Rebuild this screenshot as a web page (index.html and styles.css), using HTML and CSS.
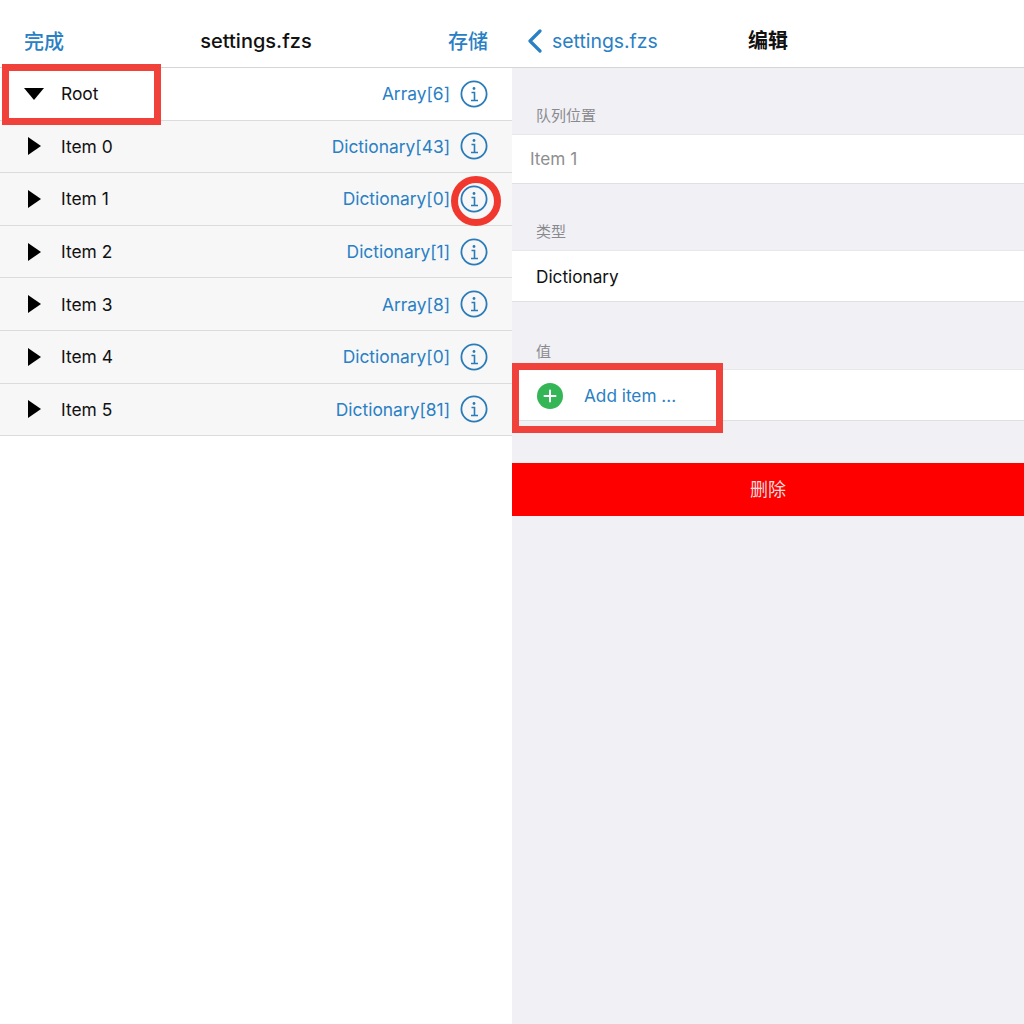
FILE: index.html
```html
<!DOCTYPE html>
<html lang="zh">
<head>
  <meta charset="UTF-8">
  <title>settings.fzs</title>
  <link rel="stylesheet" href="styles.css">
</head>
<body>

  <div class="screens">
    <section class="pane list-pane">
      <header class="nav">
        <span class="nav-action">完成</span>
        <span class="nav-title">settings.fzs</span>
        <span class="nav-action">存储</span>
      </header>

      <div class="tree">
        <div class="row root">
          <svg class="arrow" width="20" height="14" viewBox="0 0 20 14"><path d="M0 1h20L10 13z"/></svg>
          <span class="row-name">Root</span>
          <span class="row-type">Array[6]</span>
          <svg class="info" width="28" height="28" viewBox="0 0 28 28"><use href="#info-icon"/></svg>
        </div>
        <div class="row">
          <svg class="arrow" width="20" height="18" viewBox="0 0 20 18"><path d="M4 0l13 9-13 9z"/></svg>
          <span class="row-name">Item 0</span>
          <span class="row-type">Dictionary[43]</span>
          <svg class="info" width="28" height="28" viewBox="0 0 28 28"><use href="#info-icon"/></svg>
        </div>
        <div class="row">
          <svg class="arrow" width="20" height="18" viewBox="0 0 20 18"><path d="M4 0l13 9-13 9z"/></svg>
          <span class="row-name">Item 1</span>
          <span class="row-type">Dictionary[0]</span>
          <svg class="info" width="28" height="28" viewBox="0 0 28 28"><use href="#info-icon"/></svg>
          <span class="mark-circle"></span>
        </div>
        <div class="row">
          <svg class="arrow" width="20" height="18" viewBox="0 0 20 18"><path d="M4 0l13 9-13 9z"/></svg>
          <span class="row-name">Item 2</span>
          <span class="row-type">Dictionary[1]</span>
          <svg class="info" width="28" height="28" viewBox="0 0 28 28"><use href="#info-icon"/></svg>
        </div>
        <div class="row">
          <svg class="arrow" width="20" height="18" viewBox="0 0 20 18"><path d="M4 0l13 9-13 9z"/></svg>
          <span class="row-name">Item 3</span>
          <span class="row-type">Array[8]</span>
          <svg class="info" width="28" height="28" viewBox="0 0 28 28"><use href="#info-icon"/></svg>
        </div>
        <div class="row">
          <svg class="arrow" width="20" height="18" viewBox="0 0 20 18"><path d="M4 0l13 9-13 9z"/></svg>
          <span class="row-name">Item 4</span>
          <span class="row-type">Dictionary[0]</span>
          <svg class="info" width="28" height="28" viewBox="0 0 28 28"><use href="#info-icon"/></svg>
        </div>
        <div class="row">
          <svg class="arrow" width="20" height="18" viewBox="0 0 20 18"><path d="M4 0l13 9-13 9z"/></svg>
          <span class="row-name">Item 5</span>
          <span class="row-type">Dictionary[81]</span>
          <svg class="info" width="28" height="28" viewBox="0 0 28 28"><use href="#info-icon"/></svg>
        </div>
      </div>
      <div class="mark-box mark-root"></div>
    </section>

    <section class="pane edit-pane">
      <header class="nav edit-nav">
        <span class="back">
          <svg width="16" height="24" viewBox="0 0 16 24"><path d="M13 2L3 12l10 10" fill="none" stroke="#2a80c4" stroke-width="3.2" stroke-linecap="round" stroke-linejoin="round"/></svg>
          settings.fzs
        </span>
        <span class="nav-title edit-title">编辑</span>
      </header>

      <div class="group-label first-label">队列位置</div>
      <div class="field name-field">Item 1</div>

      <div class="group-label">类型</div>
      <div class="field type-field">Dictionary</div>

      <div class="group-label value-label">值</div>
      <div class="field add-field">
        <svg width="26" height="26" viewBox="0 0 26 26">
          <circle cx="13" cy="13" r="13" fill="#34b556"/>
          <path d="M13 7.5v11M7.5 13h11" stroke="#fff" stroke-width="2" stroke-linecap="round"/>
        </svg>
        <span class="add-text">Add item ...</span>
      </div>
      <div class="mark-box mark-add"></div>

      <div class="delete-btn">删除</div>
    </section>
  </div>

  <svg class="defs" width="0" height="0">
    <defs>
      <g id="info-icon" fill="none" stroke="#2a7cb8">
        <circle cx="14" cy="14" r="12.6" stroke-width="1.8"/>
        <path d="M11.5 12.5H14.5V20M11 20.5h7" stroke-width="1.6"/>
        <circle cx="14" cy="8.5" r="1.4" fill="#2a7cb8" stroke="none"/>
      </g>
    </defs>
  </svg>

</body>
</html>
```

FILE: styles.css
```css
html, body {
  margin: 0;
  padding: 0;
  background: #fff;
}

body {
  font-family: Inter, "Noto Sans CJK SC", sans-serif;
  color: #111;
}

.screens {
  display: flex;
  width: 1024px;
  height: 1024px;
  overflow: hidden;
}

.pane {
  position: relative;
  width: 512px;
  height: 1024px;
}

.edit-pane {
  background: #f0f0f5;
}

.nav {
  display: flex;
  align-items: center;
  justify-content: space-between;
  box-sizing: border-box;
  height: 68px;
  padding: 14px 24px 0;
  background: #fff;
  border-bottom: 1px solid #d6d6d8;
}

.nav-action {
  font-size: 20px;
  font-weight: 500;
  color: #2a80c4;
}

.nav-title {
  font-size: 20px;
  font-weight: 500;
}

.edit-nav {
  position: relative;
  justify-content: flex-start;
  padding-left: 15px;
}

.edit-title {
  position: absolute;
  left: 236px;
  top: 27px;
  line-height: 28px;
  font-weight: 600;
}

.back {
  display: flex;
  align-items: center;
  gap: 9px;
  font-size: 19.4px;
  color: #2a80c4;
}

.tree .row {
  display: flex;
  align-items: center;
  position: relative;
  box-sizing: border-box;
  height: 52.6px;
  padding: 0 24px;
  background: #f7f7f7;
  border-bottom: 1px solid #dcdcde;
}

.tree .root {
  background: #fff;
}

.arrow {
  width: 20px;
  margin-right: 17px;
  flex: none;
}

.row-name {
  flex: 1;
  font-size: 17.4px;
}

.row-type {
  font-size: 17.4px;
  color: #2a80c4;
  margin-right: 10px;
}

.info {
  flex: none;
}

.mark-circle {
  position: absolute;
  right: 11px;
  top: 3px;
  box-sizing: border-box;
  width: 50px;
  height: 50px;
  border: 7px solid #f0382f;
  border-radius: 50%;
}

.mark-box {
  position: absolute;
  box-sizing: border-box;
  border: 7px solid #f0413a;
}

.mark-root {
  left: 2px;
  top: 64px;
  width: 159px;
  height: 61px;
}

.mark-add {
  left: 0;
  top: 363px;
  width: 211px;
  height: 70px;
}

.group-label {
  margin: 38px 0 0;
  padding-left: 24px;
  height: 19px;
  line-height: 19px;
  font-size: 15px;
  color: #8a8a8e;
}

.first-label {
  margin-top: 38px;
}

.value-label {
  margin-top: 40px;
}

.field {
  display: flex;
  align-items: center;
  box-sizing: border-box;
  background: #fff;
  font-size: 17.2px;
  padding-left: 24px;
  border-top: 1px solid #e8e8ec;
  border-bottom: 1px solid #e0e0e4;
}

.name-field {
  height: 50px;
  margin-top: 9px;
  padding-left: 18px;
  padding-bottom: 2px;
  color: #8e8e8e;
}

.type-field {
  height: 52px;
  margin-top: 9px;
}

.add-field {
  height: 52px;
  margin-top: 8px;
  padding-left: 25px;
  padding-top: 1px;
}

.add-text {
  margin-left: 21px;
  color: #2a80c4;
}

.delete-btn {
  display: flex;
  align-items: center;
  justify-content: center;
  box-sizing: border-box;
  height: 53px;
  padding-bottom: 3px;
  margin-top: 42px;
  background: #fe0000;
  color: #f8dcdc;
  font-size: 18px;
}

.defs {
  position: absolute;
}
```
